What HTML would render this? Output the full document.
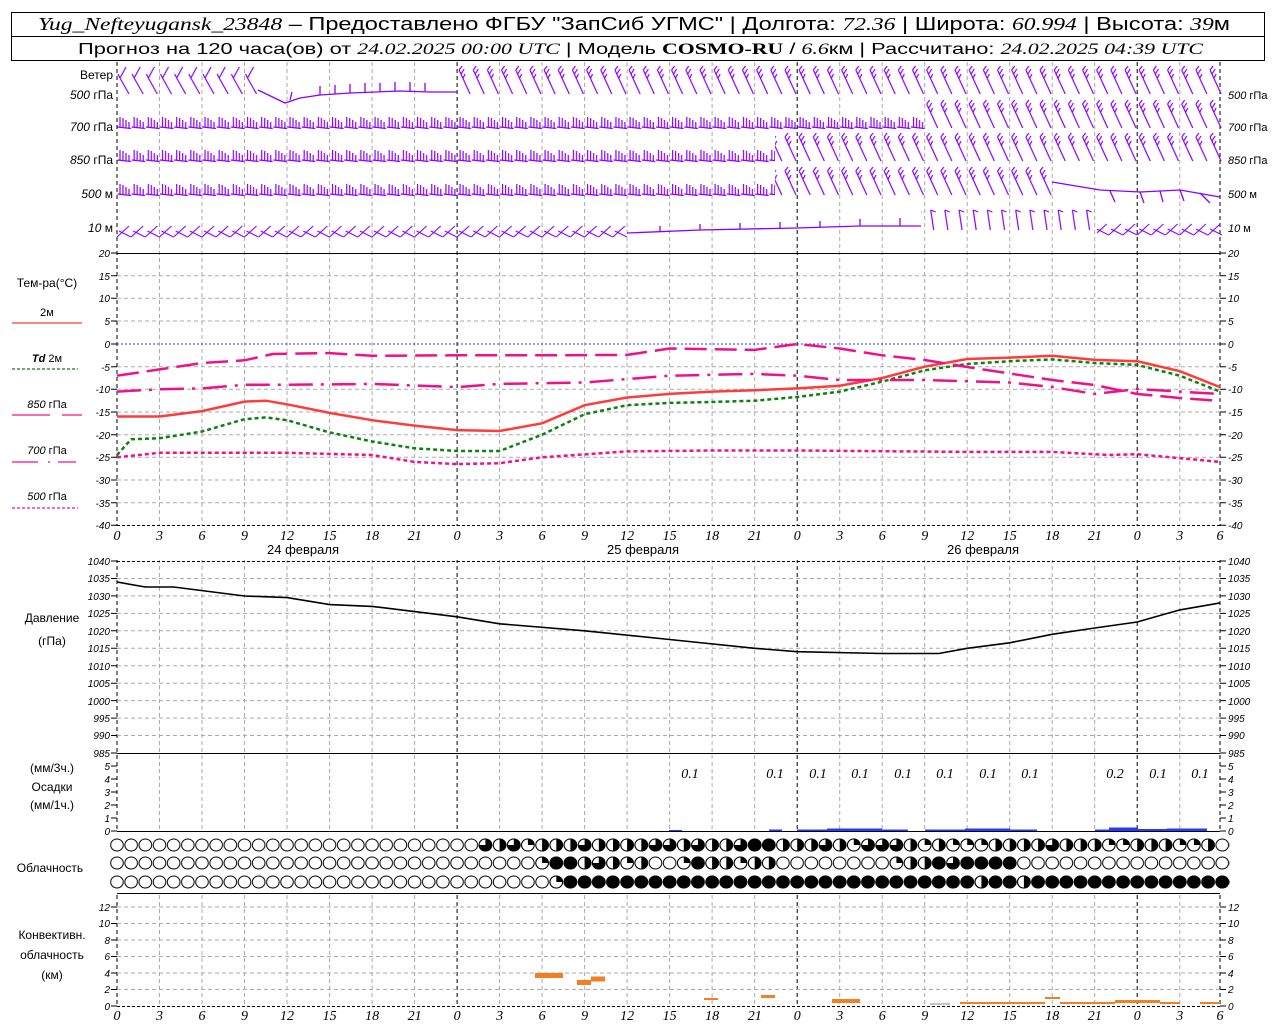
<!DOCTYPE html>
<html><head><meta charset="utf-8"><style>
html,body{margin:0;padding:0;background:#fff;}
svg{display:block;font-family:"Liberation Sans","DejaVu Sans",sans-serif;}
.tk{font-size:10px;font-style:italic;fill:#000}
.xl{font-size:14px;font-style:italic;font-family:"Liberation Serif",serif}
.lb{font-size:12px}
</style></head><body>
<svg width="1280" height="1024" viewBox="0 0 1280 1024" xmlns="http://www.w3.org/2000/svg">
<defs>
<pattern id="pA" patternUnits="userSpaceOnUse" x="117" y="0" width="14.17" height="20"><path d="M0.5,15 L14,16.5 M3,15.3 V5 M6,15.6 V6 M9,16 V8 M12,16.3 V10" stroke="#8a00ff" stroke-width="1.2" fill="none"/></pattern>
<pattern id="pB" patternUnits="userSpaceOnUse" x="117" y="0" width="14.17" height="30"><path d="M2,4 L13,28 M2,4 L5,0 M4,8 L7,3 M6,12 L8,8" stroke="#8a00ff" stroke-width="1.2" fill="none"/></pattern>
<pattern id="pC" patternUnits="userSpaceOnUse" x="117" y="0" width="14.17" height="30"><path d="M9,1 L3,12 L12,28 M3,12 L1,8" stroke="#8a00ff" stroke-width="1.2" fill="none"/></pattern>
<pattern id="pD" patternUnits="userSpaceOnUse" x="117" y="0" width="14.17" height="22"><path d="M6,1 L9,21 M6,1 L11,3" stroke="#8a00ff" stroke-width="1.2" fill="none"/></pattern>
<pattern id="pX" patternUnits="userSpaceOnUse" x="117" y="0" width="14.17" height="18"><path d="M0,15 L12,4 M2,9 L14,15" stroke="#8a00ff" stroke-width="1.1" fill="none"/></pattern>
<pattern id="emp" patternUnits="userSpaceOnUse" x="109.9" y="0" width="14.17" height="14"><ellipse cx="7.085" cy="7" rx="6.3" ry="6" fill="#fff" stroke="#000" stroke-width="1"/></pattern>
<pattern id="ful" patternUnits="userSpaceOnUse" x="109.9" y="0" width="14.17" height="14"><ellipse cx="7.085" cy="7" rx="6.3" ry="6" fill="#000" stroke="#000" stroke-width="1"/></pattern>
<g id="c1"><ellipse rx="6.3" ry="6" fill="#fff" stroke="#000"/><path d="M0,0V-6A6.3,6 0 0 1 6.3,0Z"/></g>
<g id="c2"><ellipse rx="6.3" ry="6" fill="#fff" stroke="#000"/><path d="M0,-6A6.3,6 0 0 1 0,6Z"/></g>
<g id="c3"><ellipse rx="6.3" ry="6" fill="#fff" stroke="#000"/><path d="M0,0V-6A6.3,6 0 1 1 -6.3,0Z"/></g>
<g id="c4"><ellipse rx="6.3" ry="6" fill="#000" stroke="#000"/></g>
</defs>

<!-- header -->
<rect x="11.5" y="12.5" width="1253" height="48" fill="none" stroke="#000"/>
<line x1="11" y1="36.5" x2="1265" y2="36.5" stroke="#000"/>
<text x="38" y="30" font-size="18" textLength="1192" lengthAdjust="spacingAndGlyphs"><tspan font-family="Liberation Serif,serif" font-style="italic">Yug_Nefteyugansk_23848</tspan> – Предоставлено ФГБУ "ЗапСиб УГМС" | Долгота: <tspan font-family="Liberation Serif,serif" font-style="italic">72.36</tspan> | Широта: <tspan font-family="Liberation Serif,serif" font-style="italic">60.994</tspan> | Высота: <tspan font-family="Liberation Serif,serif" font-style="italic">39</tspan>м</text>
<text x="78" y="54" font-size="16" textLength="1125" lengthAdjust="spacingAndGlyphs">Прогноз на 120 часа(ов) от <tspan font-family="Liberation Serif,serif" font-style="italic">24.02.2025 00:00 UTC</tspan> | Модель <tspan font-family="Liberation Serif,serif" font-weight="bold">COSMO-RU</tspan> / <tspan font-family="Liberation Serif,serif" font-style="italic">6.6</tspan>км | Рассчитано: <tspan font-family="Liberation Serif,serif" font-style="italic">24.02.2025 04:39 UTC</tspan></text>

<!-- vertical grid -->
<g stroke="#aaa" stroke-dasharray="4,3" stroke-width="1">
<line x1="159.5" y1="62" x2="159.5" y2="1006"/><line x1="202" y1="62" x2="202" y2="1006"/><line x1="244.5" y1="62" x2="244.5" y2="1006"/><line x1="287" y1="62" x2="287" y2="1006"/><line x1="329.6" y1="62" x2="329.6" y2="1006"/><line x1="372.1" y1="62" x2="372.1" y2="1006"/><line x1="414.6" y1="62" x2="414.6" y2="1006"/>
<line x1="499.6" y1="62" x2="499.6" y2="1006"/><line x1="542.1" y1="62" x2="542.1" y2="1006"/><line x1="584.6" y1="62" x2="584.6" y2="1006"/><line x1="627.1" y1="62" x2="627.1" y2="1006"/><line x1="669.6" y1="62" x2="669.6" y2="1006"/><line x1="712.1" y1="62" x2="712.1" y2="1006"/><line x1="754.7" y1="62" x2="754.7" y2="1006"/>
<line x1="839.7" y1="62" x2="839.7" y2="1006"/><line x1="882.2" y1="62" x2="882.2" y2="1006"/><line x1="924.7" y1="62" x2="924.7" y2="1006"/><line x1="967.2" y1="62" x2="967.2" y2="1006"/><line x1="1009.7" y1="62" x2="1009.7" y2="1006"/><line x1="1052.2" y1="62" x2="1052.2" y2="1006"/><line x1="1094.7" y1="62" x2="1094.7" y2="1006"/>
<line x1="1179.8" y1="62" x2="1179.8" y2="1006"/>
</g>
<g stroke="#000" stroke-dasharray="4,3" stroke-width="1">
<line x1="457.1" y1="62" x2="457.1" y2="1006"/><line x1="797.2" y1="62" x2="797.2" y2="1006"/><line x1="1137.2" y1="62" x2="1137.2" y2="1006"/>
<line x1="117" y1="62" x2="117" y2="1006"/><line x1="1220" y1="62" x2="1220" y2="1006"/>
</g>
<rect x="110" y="526" width="1115" height="34" fill="#fff"/>
<rect x="100" y="832" width="1135" height="61" fill="#fff"/>

<!-- horizontal grid -->
<g stroke="#aaa" stroke-dasharray="4,3">
<line x1="117" y1="275.7" x2="1220" y2="275.7"/><line x1="117" y1="298.3" x2="1220" y2="298.3"/><line x1="117" y1="321" x2="1220" y2="321"/><line x1="117" y1="366.7" x2="1220" y2="366.7"/><line x1="117" y1="389.3" x2="1220" y2="389.3"/><line x1="117" y1="412" x2="1220" y2="412"/><line x1="117" y1="434.7" x2="1220" y2="434.7"/><line x1="117" y1="457.3" x2="1220" y2="457.3"/><line x1="117" y1="480" x2="1220" y2="480"/><line x1="117" y1="502.7" x2="1220" y2="502.7"/>
<line x1="117" y1="578.5" x2="1220" y2="578.5"/><line x1="117" y1="595.9" x2="1220" y2="595.9"/><line x1="117" y1="613.4" x2="1220" y2="613.4"/><line x1="117" y1="630.8" x2="1220" y2="630.8"/><line x1="117" y1="648.3" x2="1220" y2="648.3"/><line x1="117" y1="665.7" x2="1220" y2="665.7"/><line x1="117" y1="683.2" x2="1220" y2="683.2"/><line x1="117" y1="700.6" x2="1220" y2="700.6"/><line x1="117" y1="718.1" x2="1220" y2="718.1"/><line x1="117" y1="735.5" x2="1220" y2="735.5"/>
<line x1="117" y1="907" x2="1220" y2="907"/><line x1="117" y1="923.5" x2="1220" y2="923.5"/><line x1="117" y1="940" x2="1220" y2="940"/><line x1="117" y1="956.5" x2="1220" y2="956.5"/><line x1="117" y1="973" x2="1220" y2="973"/><line x1="117" y1="989.5" x2="1220" y2="989.5"/>
</g>
<line x1="117" y1="344" x2="1220" y2="344" stroke="#2040ff" stroke-dasharray="2,2"/>
<g stroke="#000">
<line x1="117" y1="253.5" x2="1220" y2="253.5"/>
<line x1="117" y1="753.5" x2="1220" y2="753.5"/>
<line x1="117" y1="831.5" x2="1220" y2="831.5"/>
<line x1="117" y1="893.5" x2="1220" y2="893.5"/>
</g>
<g stroke="#000" stroke-dasharray="3,2">
<line x1="117" y1="525.5" x2="1220" y2="525.5"/>
<line x1="117" y1="561.5" x2="1220" y2="561.5"/>
<line x1="117" y1="1006.5" x2="1220" y2="1006.5"/>
</g>

<!-- wind -->
<g transform="translate(0,112)"><rect x="117" y="0" width="808" height="20" fill="url(#pA)"/></g>
<g transform="translate(0,145)"><rect x="117" y="0" width="658" height="20" fill="url(#pA)"/></g>
<g transform="translate(0,179)"><rect x="117" y="0" width="658" height="20" fill="url(#pA)"/></g>
<g transform="translate(0,66)"><rect x="117" y="0" width="141" height="30" fill="url(#pC)"/></g>
<g transform="translate(0,66)"><rect x="457" y="0" width="765" height="30" fill="url(#pB)"/></g>
<g transform="translate(0,100)"><rect x="925" y="0" width="297" height="30" fill="url(#pB)"/></g>
<g transform="translate(0,133)"><rect x="775" y="0" width="447" height="30" fill="url(#pB)"/></g>
<g transform="translate(0,167)"><rect x="775" y="0" width="277" height="30" fill="url(#pB)"/></g>
<g transform="translate(0,222)"><rect x="117" y="0" width="510" height="18" fill="url(#pX)"/></g>
<g transform="translate(0,220)"><rect x="1097" y="0" width="125" height="18" fill="url(#pX)"/></g>
<g transform="translate(0,209)"><rect x="921" y="0" width="176" height="22" fill="url(#pD)"/></g>
<g stroke="#8a00ff" stroke-width="1.3" fill="none">
<polyline points="258,90 285,103 300,98 320,95 350,93 400,91 430,92 457,92"/>
<path d="M290,100 L292,92 M320,95 V86 M335,94 V85 M350,93 V84 M365,92 V83 M380,92 V83 M395,91 V82 M410,91 V82 M425,91 V83"/>
<polyline points="1052,182 1100,190 1140,192 1180,190 1220,197"/>
<path d="M1110,191 L1115,202 M1140,192 L1144,203 M1160,191 L1163,202 M1180,190 L1184,201 M1200,193 L1210,203"/>
<polyline points="627,233 700,230 797,228 860,226 921,226"/>
<path d="M660,232 V226 M700,230 V224 M740,229 V223 M780,228 V222 M820,227 V221 M860,226 V219 M900,226 V218"/>
</g>

<!-- temp curves -->
<g fill="none" stroke-width="2.5">
<polyline stroke="#ff3c3c" points="117,416.5 159.5,416.5 202,411.1 244.5,401.6 265.8,400.7 287,404.3 329.6,412.9 372.1,420.2 414.6,425.6 457.1,430.1 499.6,431 542.1,423.3 584.6,405.2 627.1,397.5 669.6,393.9 712.1,391.6 754.7,390.2 797.2,388.4 839.7,385.7 882.2,378 924.7,366.7 967.2,359 1009.7,357.6 1052.2,355.8 1094.7,359.9 1137.2,361.2 1179.8,371.2 1220,387.1"/>
<polyline stroke="#108010" stroke-dasharray="4,3" points="117,455 131.2,439.2 159.5,438.3 202,431.5 244.5,419.2 265.8,417.4 287,420.2 329.6,432.4 372.1,441.5 414.6,448.3 457.1,451 499.6,451 542.1,434.7 584.6,414.3 627.1,405.2 669.6,402.9 712.1,402 754.7,400.7 797.2,397 839.7,391.6 882.2,381.6 924.7,370.3 967.2,364 1009.7,361.2 1052.2,359.4 1094.7,363 1137.2,364.9 1179.8,375.7 1220,391.6"/>
<polyline stroke="#f0108a" stroke-dasharray="22,8" points="117,375.7 159.5,369.4 202,363 244.5,360.3 272.9,354 329.6,353.1 372.1,355.8 457.1,355.3 542.1,355.3 627.1,354.9 669.6,348.5 754.7,349.9 797.2,344 839.7,348.5 882.2,355.3 924.7,360 967.2,367 1009.7,373.5 1052.2,380 1094.7,385 1137.2,394 1179.8,398 1220,401"/>
<polyline stroke="#f0108a" stroke-dasharray="24,8,3,8" points="117,391.6 159.5,389.3 202,388.4 244.5,384.8 287,384.8 372.1,383.9 457.1,387.1 499.6,383.9 584.6,382.5 669.6,375.7 754.7,373.9 797.2,375.7 839.7,380 924.7,380 1009.7,382.5 1052.2,387 1094.7,394 1137.2,389 1179.8,391.6 1220,394"/>
<polyline stroke="#f0108a" stroke-dasharray="4,3" points="117,457.3 159.5,452.8 287,452.8 372.1,455 414.6,461.9 457.1,464.1 499.6,463.2 542.1,457.3 627.1,451.4 712.1,450.5 797.2,450.5 967.2,451.9 1052.2,451.9 1108.9,455 1137.2,454.2 1220,461.9"/>
</g>
<!-- pressure -->
<polyline fill="none" stroke="#000" stroke-width="1.6" points="117,582 145.3,587 173.7,587 244.5,596 287,597.6 329.6,604.6 372.1,606.4 414.6,611.6 457.1,616.8 499.6,623.8 584.6,630.8 669.6,639.5 754.7,648.3 797.2,651.7 882.2,653.5 938.9,653.5 967.2,648.3 1009.7,642.8 1052.2,634.3 1094.7,628 1137.2,622 1179.8,609.9 1220,602.9"/>

<!-- precip -->
<g fill="#1f3cff">
<rect x="669" y="830" width="13" height="1"/><rect x="769" y="829.5" width="13" height="1.5"/><rect x="797" y="829.5" width="30" height="1.5"/><rect x="827" y="828.5" width="55" height="2.5"/><rect x="882" y="829.5" width="26" height="1.5"/><rect x="925" y="829.5" width="40" height="1.5"/><rect x="965" y="828.5" width="45" height="2.5"/><rect x="1010" y="829.5" width="27" height="1.5"/><rect x="1095" y="829.5" width="14" height="1.5"/><rect x="1109" y="827.5" width="28" height="3.5"/><rect x="1137" y="829" width="30" height="2"/><rect x="1167" y="828.5" width="40" height="2.5"/>
</g>
<g class="xl" font-size="13" text-anchor="middle">
<text x="690" y="778">0.1</text><text x="775" y="778">0.1</text><text x="818" y="778">0.1</text><text x="860" y="778">0.1</text><text x="903" y="778">0.1</text><text x="945" y="778">0.1</text><text x="988" y="778">0.1</text><text x="1030" y="778">0.1</text><text x="1115" y="778">0.2</text><text x="1158" y="778">0.1</text><text x="1200" y="778">0.1</text>
</g>

<!-- clouds -->
<g transform="translate(0,838)"><rect x="109.9" y="0" width="1120" height="14" fill="url(#emp)"/></g>
<g transform="translate(0,856)"><rect x="109.9" y="0" width="1120" height="14" fill="url(#emp)"/></g>
<g transform="translate(0,875)"><rect x="109.9" y="0" width="1120" height="14" fill="url(#emp)"/><rect x="563.4" y="0" width="666.5" height="14" fill="url(#ful)"/></g>
<use href="#c1" x="556.3" y="882"/><use href="#c2" x="981.4" y="882"/><use href="#c2" x="1023.9" y="882"/>
<g transform="translate(0,845)">
<use href="#c3" x="485.4"/><use href="#c2" x="499.6"/><use href="#c3" x="513.8"/><use href="#c1" x="527.9"/><use href="#c2" x="542.1"/><use href="#c2" x="556.3"/><use href="#c2" x="570.4"/><use href="#c3" x="584.6"/><use href="#c2" x="598.8"/><use href="#c2" x="613"/><use href="#c2" x="627.1"/>
<use href="#c2" x="641.3"/><use href="#c3" x="655.5"/><use href="#c3" x="669.6"/><use href="#c2" x="683.8"/><use href="#c3" x="698"/><use href="#c2" x="712.1"/><use href="#c2" x="726.3"/><use href="#c3" x="740.5"/><use href="#c4" x="754.7"/><use href="#c4" x="768.8"/>
<use href="#c2" x="783"/><use href="#c2" x="797.2"/><use href="#c2" x="811.3"/><use href="#c3" x="825.5"/><use href="#c2" x="839.7"/><use href="#c1" x="853.8"/><use href="#c3" x="868"/><use href="#c3" x="882.2"/><use href="#c3" x="896.4"/><use href="#c2" x="910.5"/>
<use href="#c1" x="924.7"/><use href="#c2" x="938.9"/><use href="#c1" x="953"/><use href="#c1" x="967.2"/><use href="#c1" x="981.4"/><use href="#c2" x="995.5"/><use href="#c2" x="1009.7"/><use href="#c2" x="1023.9"/><use href="#c2" x="1038.1"/><use href="#c3" x="1052.2"/>
<use href="#c2" x="1066.4"/><use href="#c2" x="1080.6"/><use href="#c2" x="1094.7"/><use href="#c1" x="1108.9"/><use href="#c1" x="1123.1"/><use href="#c2" x="1137.2"/><use href="#c2" x="1151.4"/><use href="#c2" x="1165.6"/><use href="#c1" x="1179.8"/><use href="#c1" x="1193.9"/><use href="#c2" x="1208.1"/>
</g>
<g transform="translate(0,863)">
<use href="#c1" x="542.1"/><use href="#c4" x="556.3"/><use href="#c4" x="570.4"/><use href="#c2" x="584.6"/><use href="#c3" x="598.8"/><use href="#c2" x="613"/><use href="#c1" x="627.1"/><use href="#c2" x="641.3"/>
<use href="#c1" x="683.8"/><use href="#c4" x="698"/><use href="#c2" x="712.1"/><use href="#c2" x="726.3"/><use href="#c1" x="740.5"/><use href="#c2" x="754.7"/><use href="#c2" x="768.8"/>
<use href="#c1" x="896.4"/><use href="#c2" x="910.5"/><use href="#c2" x="924.7"/><use href="#c4" x="938.9"/><use href="#c3" x="953"/><use href="#c4" x="967.2"/><use href="#c4" x="981.4"/><use href="#c4" x="995.5"/><use href="#c4" x="1009.7"/>
</g>

<!-- convective -->
<g fill="#f08024">
<rect x="535" y="973" width="14" height="5"/><rect x="549" y="973" width="14" height="5"/><rect x="577" y="980" width="14" height="5"/><rect x="591" y="976.5" width="14" height="5"/><rect x="704" y="998" width="14" height="2"/><rect x="761" y="995" width="14" height="3"/><rect x="832" y="999" width="28" height="4"/><rect x="960" y="1002" width="85" height="2"/><rect x="1045" y="997" width="15" height="2"/><rect x="1060" y="1002" width="55" height="2"/><rect x="1115" y="1000" width="45" height="3"/><rect x="1160" y="1002" width="20" height="2"/><rect x="1200" y="1002" width="20" height="2"/>
</g>
<line x1="930" y1="1004" x2="950" y2="1004" stroke="#888"/>

<!-- ticks -->
<g stroke="#000">
<path d="M111,253H117M111,275.7H117M111,298.3H117M111,321H117M111,344H117M111,366.7H117M111,389.3H117M111,412H117M111,434.7H117M111,457.3H117M111,480H117M111,502.7H117M111,525.3H117"/>
<path d="M1220,253H1226M1220,275.7H1226M1220,298.3H1226M1220,321H1226M1220,344H1226M1220,366.7H1226M1220,389.3H1226M1220,412H1226M1220,434.7H1226M1220,457.3H1226M1220,480H1226M1220,502.7H1226M1220,525.3H1226"/>
<path d="M111,561H117M111,578.5H117M111,595.9H117M111,613.4H117M111,630.8H117M111,648.3H117M111,665.7H117M111,683.2H117M111,700.6H117M111,718.1H117M111,735.5H117M111,753H117"/>
<path d="M1220,561H1226M1220,578.5H1226M1220,595.9H1226M1220,613.4H1226M1220,630.8H1226M1220,648.3H1226M1220,665.7H1226M1220,683.2H1226M1220,700.6H1226M1220,718.1H1226M1220,735.5H1226M1220,753H1226"/>
<path d="M111,766H117M111,779H117M111,792H117M111,805H117M111,818H117M111,831H117M1220,766H1226M1220,779H1226M1220,792H1226M1220,805H1226M1220,818H1226M1220,831H1226"/>
<path d="M111,907H117M111,923.5H117M111,940H117M111,956.5H117M111,973H117M111,989.5H117M111,1006H117M1220,907H1226M1220,923.5H1226M1220,940H1226M1220,956.5H1226M1220,973H1226M1220,989.5H1226M1220,1006H1226"/>
</g>

<!-- tick labels -->
<g class="tk" text-anchor="end">
<text x="110" y="257">20</text><text x="110" y="280">15</text><text x="110" y="302">10</text><text x="110" y="325">5</text><text x="110" y="348">0</text><text x="110" y="371">-5</text><text x="110" y="393">-10</text><text x="110" y="416">-15</text><text x="110" y="439">-20</text><text x="110" y="461">-25</text><text x="110" y="484">-30</text><text x="110" y="507">-35</text><text x="110" y="529">-40</text>
<text x="110" y="565">1040</text><text x="110" y="582">1035</text><text x="110" y="600">1030</text><text x="110" y="617">1025</text><text x="110" y="635">1020</text><text x="110" y="652">1015</text><text x="110" y="670">1010</text><text x="110" y="687">1005</text><text x="110" y="705">1000</text><text x="110" y="722">995</text><text x="110" y="739">990</text><text x="110" y="757">985</text>
<text x="110" y="770">5</text><text x="110" y="783">4</text><text x="110" y="796">3</text><text x="110" y="809">2</text><text x="110" y="822">1</text><text x="110" y="835">0</text>
<text x="110" y="911">12</text><text x="110" y="927">10</text><text x="110" y="944">8</text><text x="110" y="960">6</text><text x="110" y="977">4</text><text x="110" y="993">2</text><text x="110" y="1010">0</text>
</g>
<g class="tk" text-anchor="start">
<text x="1228" y="257">20</text><text x="1228" y="280">15</text><text x="1228" y="302">10</text><text x="1228" y="325">5</text><text x="1228" y="348">0</text><text x="1228" y="371">-5</text><text x="1228" y="393">-10</text><text x="1228" y="416">-15</text><text x="1228" y="439">-20</text><text x="1228" y="461">-25</text><text x="1228" y="484">-30</text><text x="1228" y="507">-35</text><text x="1228" y="529">-40</text>
<text x="1228" y="565">1040</text><text x="1228" y="582">1035</text><text x="1228" y="600">1030</text><text x="1228" y="617">1025</text><text x="1228" y="635">1020</text><text x="1228" y="652">1015</text><text x="1228" y="670">1010</text><text x="1228" y="687">1005</text><text x="1228" y="705">1000</text><text x="1228" y="722">995</text><text x="1228" y="739">990</text><text x="1228" y="757">985</text>
<text x="1228" y="770">5</text><text x="1228" y="783">4</text><text x="1228" y="796">3</text><text x="1228" y="809">2</text><text x="1228" y="822">1</text><text x="1228" y="835">0</text>
<text x="1228" y="911">12</text><text x="1228" y="927">10</text><text x="1228" y="944">8</text><text x="1228" y="960">6</text><text x="1228" y="977">4</text><text x="1228" y="993">2</text><text x="1228" y="1010">0</text>
</g>

<!-- x labels -->
<g class="xl" text-anchor="middle">
<g transform="translate(0,540)">
<text x="117">0</text><text x="159.5">3</text><text x="202">6</text><text x="244.5">9</text><text x="287">12</text><text x="329.6">15</text><text x="372.1">18</text><text x="414.6">21</text><text x="457.1">0</text><text x="499.6">3</text><text x="542.1">6</text><text x="584.6">9</text><text x="627.1">12</text><text x="669.6">15</text><text x="712.1">18</text><text x="754.7">21</text><text x="797.2">0</text><text x="839.7">3</text><text x="882.2">6</text><text x="924.7">9</text><text x="967.2">12</text><text x="1009.7">15</text><text x="1052.2">18</text><text x="1094.7">21</text><text x="1137.2">0</text><text x="1179.8">3</text><text x="1220">6</text>
</g>
<g transform="translate(0,1020)">
<text x="117">0</text><text x="159.5">3</text><text x="202">6</text><text x="244.5">9</text><text x="287">12</text><text x="329.6">15</text><text x="372.1">18</text><text x="414.6">21</text><text x="457.1">0</text><text x="499.6">3</text><text x="542.1">6</text><text x="584.6">9</text><text x="627.1">12</text><text x="669.6">15</text><text x="712.1">18</text><text x="754.7">21</text><text x="797.2">0</text><text x="839.7">3</text><text x="882.2">6</text><text x="924.7">9</text><text x="967.2">12</text><text x="1009.7">15</text><text x="1052.2">18</text><text x="1094.7">21</text><text x="1137.2">0</text><text x="1179.8">3</text><text x="1220">6</text>
</g>
</g>
<g font-size="13" text-anchor="middle">
<text x="303" y="554">24 февраля</text><text x="643" y="554">25 февраля</text><text x="983" y="554">26 февраля</text>
</g>

<!-- left labels -->
<g class="lb" text-anchor="end" font-size="11">
<text x="113" y="79">Ветер</text>
<text x="113" y="99"><tspan font-style="italic">500</tspan> гПа</text>
<text x="113" y="131"><tspan font-style="italic">700</tspan> гПа</text>
<text x="113" y="164"><tspan font-style="italic">850</tspan> гПа</text>
<text x="113" y="198"><tspan font-style="italic">500</tspan>  м</text>
<text x="113" y="232"><tspan font-style="italic">10</tspan>   м</text>
</g>
<g font-size="11">
<text x="1228" y="99"><tspan font-style="italic">500</tspan> гПа</text>
<text x="1228" y="131"><tspan font-style="italic">700</tspan> гПа</text>
<text x="1228" y="164"><tspan font-style="italic">850</tspan> гПа</text>
<text x="1228" y="198"><tspan font-style="italic">500</tspan>  м</text>
<text x="1228" y="232"><tspan font-style="italic">10</tspan>   м</text>
</g>
<g class="lb" text-anchor="middle">
<text x="47" y="287">Тем-ра(°C)</text>
<text x="47" y="316" font-size="11">2м</text>
<text x="47" y="362" font-size="11"><tspan font-style="italic" font-weight="bold">Td</tspan>  2м</text>
<text x="47" y="408" font-size="11"><tspan font-style="italic">850</tspan> гПа</text>
<text x="47" y="454" font-size="11"><tspan font-style="italic">700</tspan> гПа</text>
<text x="47" y="500" font-size="11"><tspan font-style="italic">500</tspan> гПа</text>
<text x="52" y="622">Давление</text>
<text x="52" y="645">(гПа)</text>
<text x="52" y="772">(мм/3ч.)</text>
<text x="52" y="791">Осадки</text>
<text x="52" y="809">(мм/1ч.)</text>
<text x="50" y="872">Облачность</text>
<text x="52" y="939">Конвективн.</text>
<text x="52" y="959">облачность</text>
<text x="52" y="979">(км)</text>
</g>
<g fill="none" stroke-width="1.3">
<line x1="12" y1="323" x2="82" y2="323" stroke="#ff3c3c"/>
<line x1="12" y1="369" x2="78" y2="369" stroke="#108010" stroke-dasharray="3,2"/>
<path d="M12,415H50M62,415H82" stroke="#f0108a"/>
<path d="M12,462H38M48,462H50M58,462H76" stroke="#f0108a"/>
<line x1="12" y1="508" x2="78" y2="508" stroke="#f0108a" stroke-dasharray="3,2"/>
</g>
</svg>
</body></html>
